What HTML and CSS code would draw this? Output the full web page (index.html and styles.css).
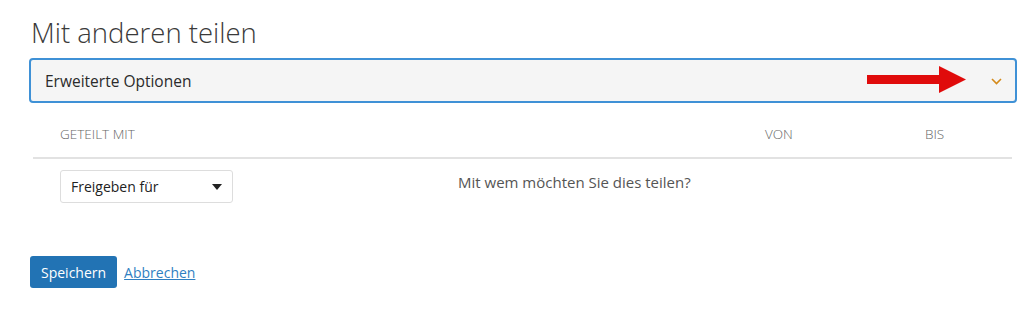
FILE: index.html
```html
<!DOCTYPE html>
<html lang="de">
<head>
<meta charset="utf-8">
<link rel="stylesheet" href="styles.css">
</head>
<body>
<div class="page">
  <h1 class="title">Mit anderen teilen</h1>
  <div class="accordion">
    <span class="acc-label">Erweiterte Optionen</span>
    <svg class="red-arrow" width="99" height="27" viewBox="0 0 99 27">
      <rect x="0" y="9" width="74" height="9" fill="#e00b0b"/>
      <polygon points="72,0 99,13.5 72,27" fill="#e00b0b"/>
    </svg>
    <svg class="chev" width="11" height="7" viewBox="0 0 11 7">
      <polyline points="1,1 5.5,5.5 10,1" fill="none" stroke="#d48a1a" stroke-width="1.6"/>
    </svg>
  </div>
  <div class="table">
    <div class="thead">
      <span class="th th-main">GETEILT MIT</span>
      <span class="th th-von">VON</span>
      <span class="th th-bis">BIS</span>
    </div>
    <div class="trow">
      <div class="select">
        <span>Freigeben für</span>
        <svg width="10" height="6" viewBox="0 0 10 6"><polygon points="0,0 10,0 5,6" fill="#222"/></svg>
      </div>
      <span class="hint">Mit wem möchten Sie dies teilen?</span>
    </div>
  </div>
  <div class="actions">
    <button class="btn">Speichern</button>
    <a class="link" href="#">Abbrechen</a>
  </div>
</div>
</body>
</html>
```
FILE: styles.css
```css
* { box-sizing: border-box; }
body {
  margin: 0;
  background: #fff;
  font-family: "Open Sans", "Liberation Sans", sans-serif;
  color: #333;
}
.page {
  padding: 13px 7px 0 29px;
}
.title {
  margin: 0 0 6px 2px;
  font-size: 27.5px;
  font-weight: 300;
  color: #3a3a3a;
  line-height: 39px;
}
.accordion {
  height: 45px;
  border: 2px solid #3f91d6;
  border-radius: 4px;
  background: #f5f5f5;
  display: flex;
  align-items: center;
  padding: 0 0 0 14px;
}
.acc-label {
  font-size: 15.5px;
  color: #2b2b2b;
  flex: 1;
}
.red-arrow {
  margin-right: 25px;
  margin-top: -3px;
}
.chev {
  margin-right: 13px;
  margin-top: 1px;
}
.table {
  margin: 0 5px 0 4px;
}
.thead {
  display: flex;
  align-items: center;
  height: 56px;
  padding: 8px 0 0 27px;
  border-bottom: 2px solid #e2e2e2;
  font-size: 13.5px;
  font-weight: 300;
  color: #666;
}
.th-main { flex: 0 0 705px; }
.th-von { flex: 0 0 160px; }
.trow {
  display: flex;
  align-items: center;
  padding: 11px 0 0 27px;
}
.select {
  width: 173px;
  height: 33px;
  border: 1px solid #ddd;
  border-radius: 3px;
  display: flex;
  align-items: center;
  justify-content: space-between;
  padding: 0 10px 0 10px;
  font-size: 14px;
  color: #222;
}
.hint {
  margin-left: 225px;
  margin-top: -10px;
  font-size: 15px;
  color: #555;
}
.actions {
  display: flex;
  align-items: center;
  margin-top: 53px;
  margin-left: 1px;
  gap: 7px;
}
.btn {
  height: 32px;
  padding: 0 11px;
  border: none;
  border-radius: 3px;
  background: #2273b4;
  color: #fff;
  font-family: inherit;
  font-size: 14px;
}
.link {
  font-size: 14px;
  color: #2f7fc1;
  text-decoration: underline;
}
```
